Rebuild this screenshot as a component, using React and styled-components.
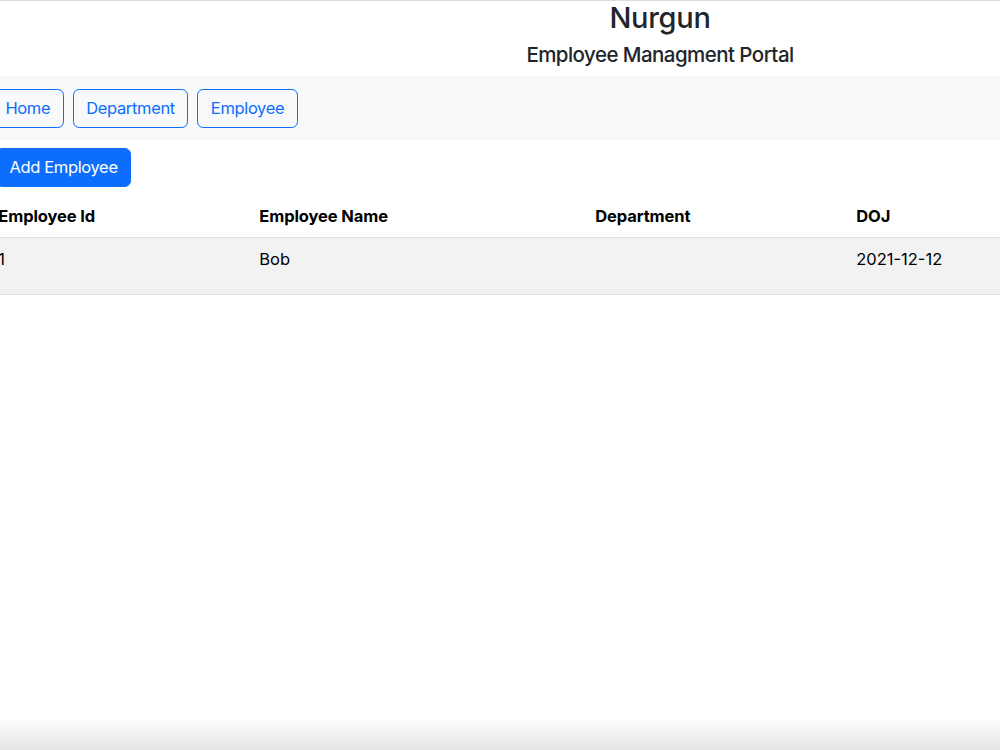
import React from "react";
import styled, { createGlobalStyle } from "styled-components";

const Global = createGlobalStyle`
  html, body { margin: 0; padding: 0; background: #fff; overflow: hidden; }
  body {
    font-family: Inter, "Liberation Sans", sans-serif;
    color: #212529;
    font-size: 16.5px;
    line-height: 1.5;
  }
  * { box-sizing: border-box; }
`;

const Page = styled.div`
  width: 1340px;
  margin-left: -10px;
  border-top: 1px solid #dcdcdc;
`;

const Header = styled.header`
  text-align: center;
`;

const Title = styled.h3`
  margin: 0;
  font-size: 29px;
  font-weight: 500;
  line-height: 1.2;
  letter-spacing: -0.3px;
`;

const Subtitle = styled.h5`
  margin: 7px 0 0;
  font-size: 20.5px;
  font-weight: 500;
  line-height: 1.2;
  letter-spacing: -0.55px;
  padding-bottom: 9px;
`;

const NavBar = styled.nav`
  background: #f8f9fa;
  display: flex;
  gap: 9.2px;
  padding: 12.5px 0 12px 2px;
`;

const Button = styled.button`
  font-family: inherit;
  font-size: 16.5px;
  line-height: 1.5;
  font-weight: 400;
  padding: 6.2px 12.4px;
  border-radius: 6.2px;
  cursor: pointer;
  border: 1px solid #0d6efd;
  background: ${(p) => (p.$variant === "solid" ? "#0d6efd" : "transparent")};
  color: ${(p) => (p.$variant === "solid" ? "#fff" : "#0d6efd")};
  letter-spacing: -0.35px;
`;

const Toolbar = styled.div`
  display: flex;
  padding: 8px 0 0 6px;
`;

const Table = styled.table`
  width: 100%;
  margin-top: 8.5px;
  border-collapse: collapse;
  vertical-align: top;
  font-size: 16.5px;
`;

const Col = styled.col`
  width: ${(p) => p.$w}px;
`;

const Th = styled.th`
  text-align: left;
  font-weight: 700;
  padding: 8.25px;
  border-bottom: 1px solid #dee2e6;
  color: #000;
  letter-spacing: -0.1px;
`;

const Row = styled.tr`
  background: ${(p) => (p.$striped ? "#f2f2f2" : "transparent")};
  height: 57px;
`;

const Td = styled.td`
  padding: 9px 8.25px 8.25px;
  border-bottom: 1px solid #dee2e6;
  vertical-align: top;
  color: #000;
`;

const BottomShade = styled.div`
  position: fixed;
  left: 0;
  right: 0;
  bottom: 0;
  height: 32px;
  pointer-events: none;
  background: linear-gradient(to bottom, rgba(0,0,0,0), rgba(0,0,0,0.1));
`;

const employees = [
  { id: 1, name: "Bob", department: "", doj: "2021-12-12" },
];

export default function App() {
  return (
    <>
      <Global />
      <Page>
        <Header>
          <Title>Nurgun</Title>
          <Subtitle>Employee Managment Portal</Subtitle>
        </Header>
        <NavBar>
          <Button>Home</Button>
          <Button>Department</Button>
          <Button>Employee</Button>
        </NavBar>
        <Toolbar>
          <Button $variant="solid">Add Employee</Button>
        </Toolbar>
        <Table>
          <colgroup>
            <Col $w={261} />
            <Col $w={336} />
            <Col $w={261} />
            <Col $w={482} />
          </colgroup>
          <thead>
            <tr>
              <Th>Employee Id</Th>
              <Th>Employee Name</Th>
              <Th>Department</Th>
              <Th>DOJ</Th>
            </tr>
          </thead>
          <tbody>
            {employees.map((e) => (
              <Row key={e.id} $striped>
                <Td>{e.id}</Td>
                <Td>{e.name}</Td>
                <Td>{e.department}</Td>
                <Td>{e.doj}</Td>
              </Row>
            ))}
          </tbody>
        </Table>
      </Page>
      <BottomShade />
    </>
  );
}
